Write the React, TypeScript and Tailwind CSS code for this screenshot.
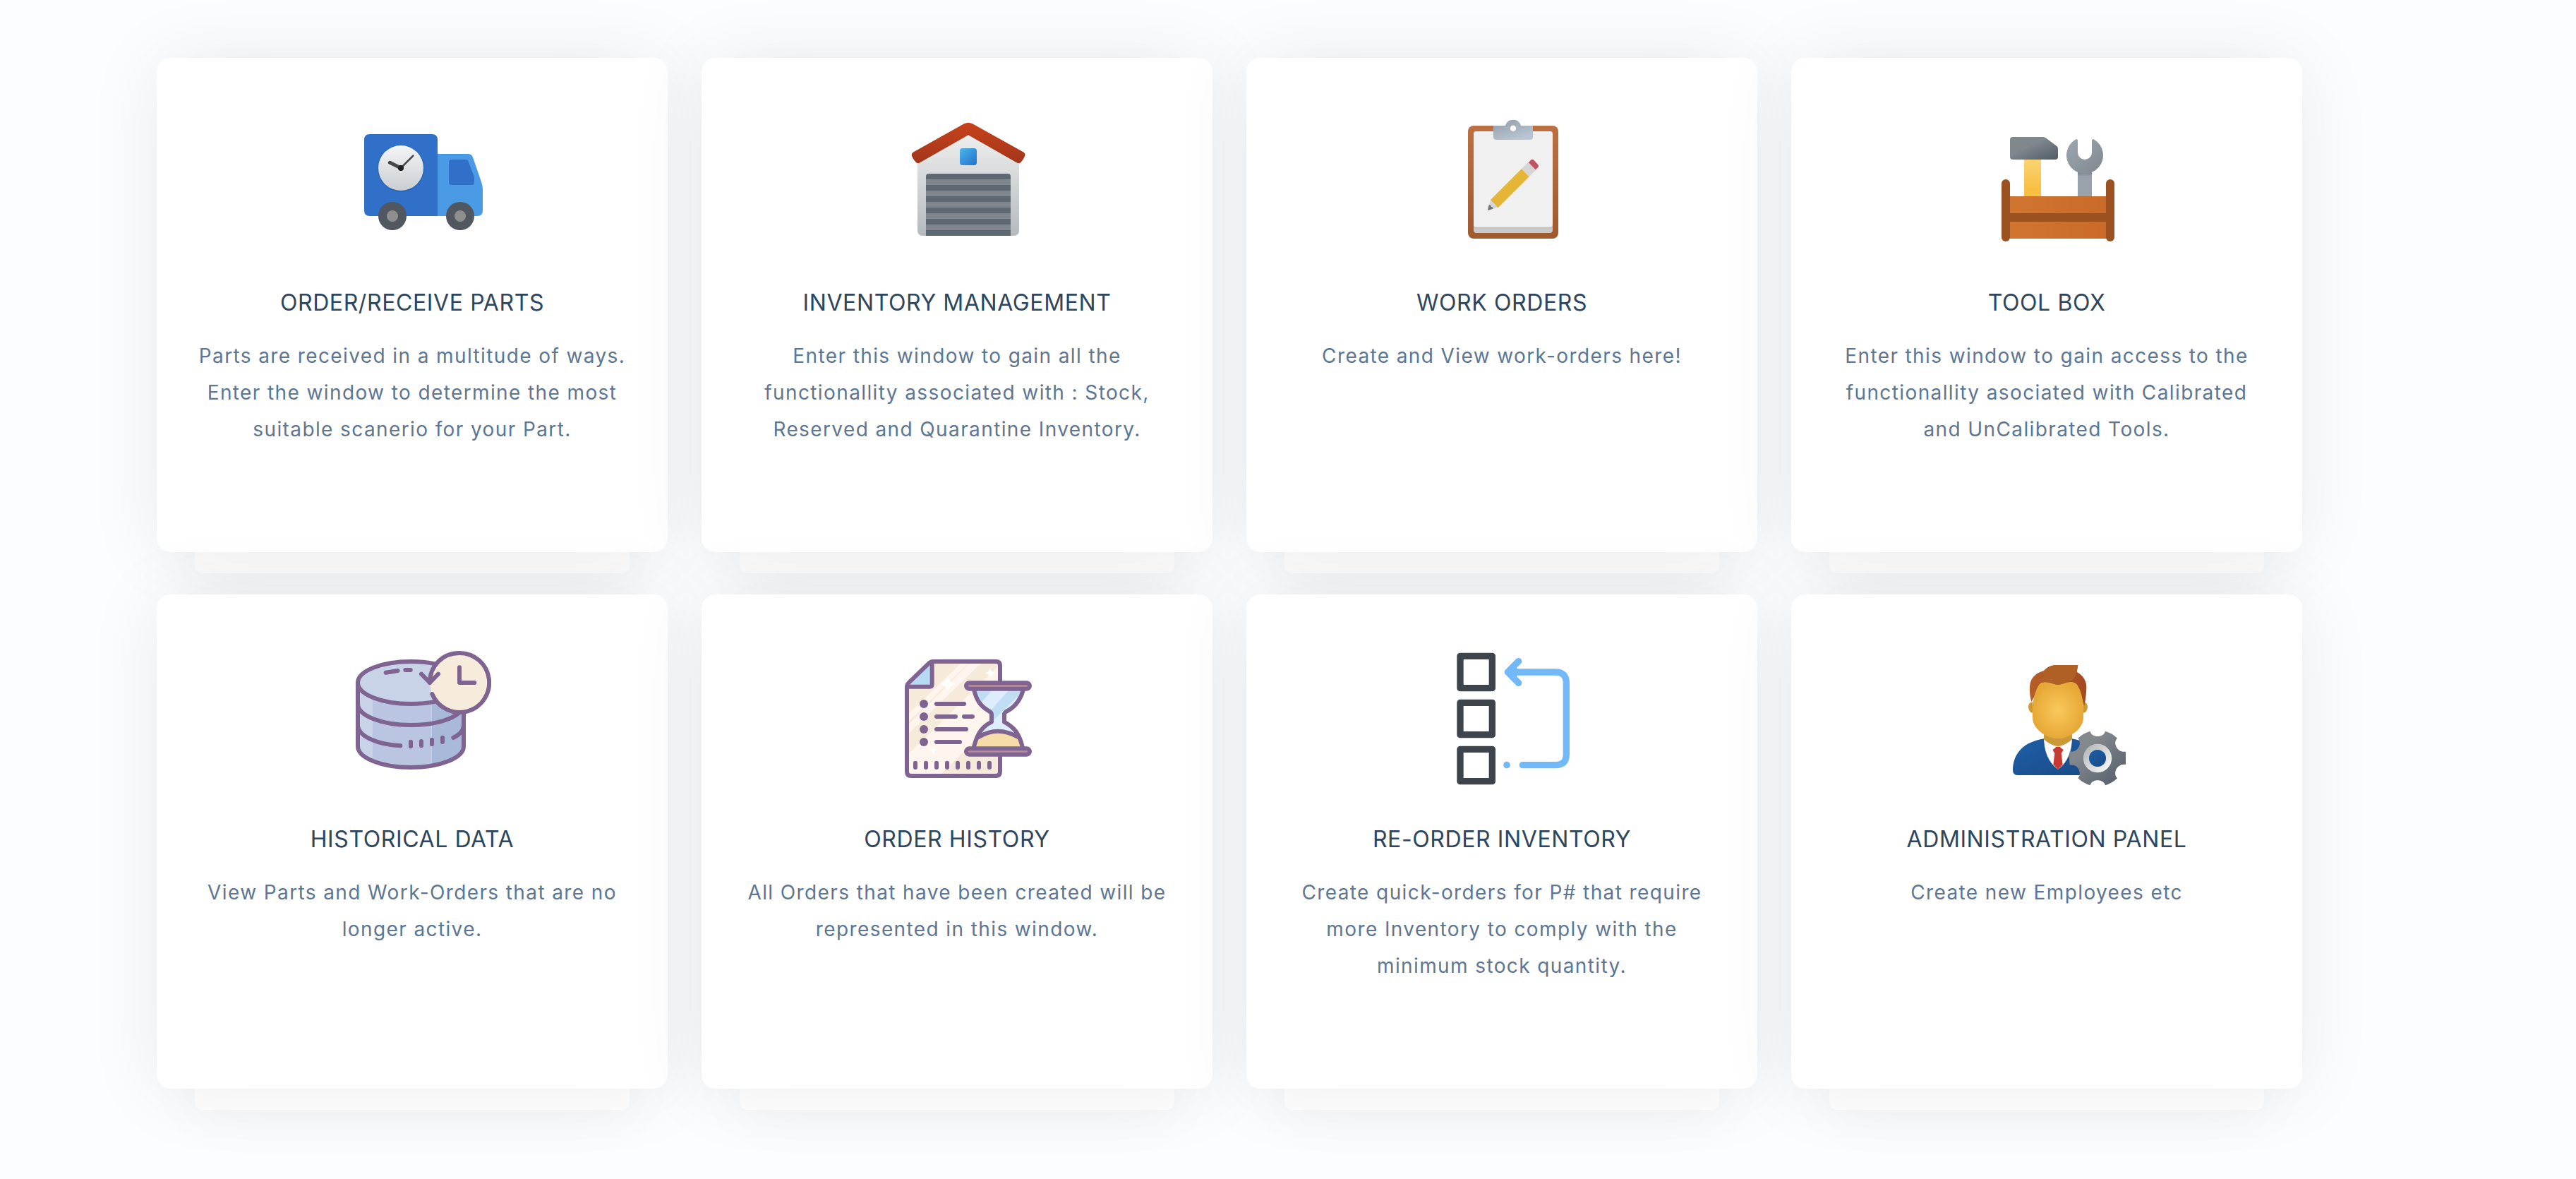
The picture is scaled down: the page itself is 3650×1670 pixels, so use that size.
import type { ReactNode } from "react";

const P = "#7f6491";

function TruckIcon() {
  return (
    <svg viewBox="42 6 576 576" className="size-48">
      <defs>
        <linearGradient id="truckClock" x1="0" y1="0" x2="0" y2="1">
          <stop offset="0" stopColor="#f4f5f7" />
          <stop offset="1" stopColor="#caced1" />
        </linearGradient>
        <radialGradient id="truckShade">
          <stop offset="0.85" stopColor="#123a70" stopOpacity="0.45" />
          <stop offset="1" stopColor="#123a70" stopOpacity="0" />
        </radialGradient>
      </defs>
      <path d="M390 174H520Q534 174 540 188L577 296Q582 310 582 324V414Q582 438 558 438H390Z" fill="#4a9ae6" />
      <path d="M102 90H366Q390 90 390 114V438H102Q78 438 78 414V114Q78 90 102 90Z" fill="#3070c8" />
      <path d="M450 198H510Q518 198 521 206L542 262Q546 272 546 282V294Q546 306 534 306H450Q438 306 438 294V210Q438 198 450 198Z" fill="#3070c8" />
      <circle cx="234" cy="236" r="103" fill="url(#truckShade)" />
      <circle cx="234" cy="234" r="96" fill="url(#truckClock)" />
      <path d="M234 234L187 211" stroke="#45484c" strokeWidth="15" strokeLinecap="round" />
      <path d="M234 234L286 182" stroke="#45484c" strokeWidth="8" strokeLinecap="round" />
      <circle cx="234" cy="234" r="12" fill="#1d1f21" />
      <circle cx="198" cy="438" r="60" fill="#50575f" />
      <circle cx="198" cy="438" r="24" fill="#8f8f8f" />
      <circle cx="486" cy="438" r="60" fill="#50575f" />
      <circle cx="486" cy="438" r="24" fill="#8f8f8f" />
    </svg>
  );
}

function GarageIcon() {
  return (
    <svg viewBox="18 6 576 576" className="size-48">
      <defs>
        <linearGradient id="garageWall" x1="0" y1="0" x2="0" y2="1">
          <stop offset="0" stopColor="#f0f0ef" />
          <stop offset="1" stopColor="#b4babe" />
        </linearGradient>
        <linearGradient id="garageRoof" x1="0" y1="0" x2="0" y2="1">
          <stop offset="0" stopColor="#c8421c" />
          <stop offset="1" stopColor="#a2361a" />
        </linearGradient>
        <linearGradient id="garageWindow" x1="0" y1="0" x2="1" y2="1">
          <stop offset="0" stopColor="#4ab4e9" />
          <stop offset="1" stopColor="#2372cc" />
        </linearGradient>
      </defs>
      <path d="M306 80L522 200V498Q522 522 498 522H114Q90 522 90 498V200Z" fill="url(#garageWall)" />
      <path d="M98 212Q90 216 83 209Q70 196 65 180Q64 172 71 167L288 46Q306 36 324 46L542 167Q549 172 547 181Q542 197 530 209Q523 216 514 212L306 94Z" fill="url(#garageRoof)" />
      <rect x="270" y="150" width="72" height="72" rx="11" fill="url(#garageWindow)" />
      <path d="M138 258H474Q486 258 486 270V522H126V270Q126 258 138 258Z" fill="#5d6872" />
      <path d="M126 282H486V306H126ZM126 330H486V354H126ZM126 378H486V402H126ZM126 426H486V450H126ZM126 474H486V498H126Z" fill="#80868e" />
    </svg>
  );
}

function ClipboardIcon() {
  return (
    <svg viewBox="-6 21 576 576" className="size-48">
      <defs>
        <linearGradient id="clipBoard" x1="0" y1="0" x2="0" y2="1">
          <stop offset="0" stopColor="#bd7042" />
          <stop offset="1" stopColor="#9f5a2e" />
        </linearGradient>
        <linearGradient id="clipMetal" x1="0" y1="0" x2="0.6" y2="1">
          <stop offset="0" stopColor="#939da7" />
          <stop offset="1" stopColor="#b9c5d3" />
        </linearGradient>
      </defs>
      <rect x="90" y="69" width="384" height="480" rx="24" fill="url(#clipBoard)" />
      <rect x="114" y="93" width="336" height="432" rx="12" fill="#c9c9c9" />
      <rect x="114" y="93" width="336" height="412" rx="12" fill="#bfbfbf" />
      <rect x="114" y="93" width="336" height="407" rx="12" fill="#f0f0f0" />
      <path d="M198 69H248Q257 44 282 44Q307 44 316 69H366V117Q366 129 354 129H210Q198 129 198 117Z" fill="url(#clipMetal)" />
      <circle cx="282" cy="80" r="12" fill="#fff" />
      <path d="M174 429L186 384L218 416Z" fill="#d6d6d6" />
      <path d="M174 429L179 406Q188 406 188 413Q196 414 196 422Z" fill="#707070" />
      <path d="M186 384L318 252L350 286L218 418Z" fill="#e5b636" />
      <path d="M318 252L348 222L382 254L350 286Z" fill="#d5d5d5" />
      <path d="M348 226L357 215Q363 209 370 215L387 234Q393 240 388 246L377 256Z" fill="#c05360" />
    </svg>
  );
}

function ToolBoxIcon() {
  return (
    <svg viewBox="30 -24 576 576" className="size-48">
      <defs>
        <linearGradient id="toolHead" x1="0" y1="0" x2="1" y2="1">
          <stop offset="0.4" stopColor="#80878d" />
          <stop offset="1" stopColor="#4f5b66" />
        </linearGradient>
        <linearGradient id="toolHandle" x1="0" y1="0" x2="0" y2="1">
          <stop offset="0" stopColor="#fad577" />
          <stop offset="0.8" stopColor="#f9bf43" />
        </linearGradient>
        <linearGradient id="toolWrench" x1="0" y1="0" x2="1" y2="1">
          <stop offset="0" stopColor="#9ea7b0" />
          <stop offset="1" stopColor="#80878e" />
        </linearGradient>
        <linearGradient id="toolShaft" x1="0" y1="0" x2="0" y2="1">
          <stop offset="0" stopColor="#6d737a" />
          <stop offset="0.22" stopColor="#99a1ab" />
        </linearGradient>
        <linearGradient id="toolWood" x1="0" y1="0" x2="1" y2="0">
          <stop offset="0" stopColor="#d07631" />
          <stop offset="1" stopColor="#ca6a28" />
        </linearGradient>
      </defs>
      <rect x="174" y="160" width="72" height="164" fill="url(#toolHandle)" />
      <path d="M126 72H254Q262 72 268 77L312 110Q318 115 318 122V156Q318 168 306 168H126Q114 168 114 156V84Q114 72 126 72Z" fill="url(#toolHead)" />
      <rect x="402" y="215" width="60" height="109" fill="url(#toolShaft)" />
      <path d="M402 86Q400 78 392 83A78 78 0 1 0 472 83Q464 78 462 86V138A30 30 0 0 1 402 138Z" fill="url(#toolWrench)" />
      <rect x="105" y="324" width="426" height="180" fill="url(#toolWood)" />
      <rect x="105" y="396" width="426" height="36" fill="#9c5120" />
      <rect x="78" y="252" width="36" height="264" rx="18" fill="#9c5120" />
      <rect x="522" y="252" width="36" height="264" rx="18" fill="#9c5120" />
    </svg>
  );
}

function DatabaseIcon() {
  return (
    <svg viewBox="72 66 576 576" className="size-48" fill="none" stroke={P} strokeWidth="18" strokeLinecap="round" strokeLinejoin="round">
      <path d="M81 201H144V530Q81 505 81 471Z" fill="#c8d3e8" stroke="none" />
      <path d="M144 250H395V552Q260 575 144 530Z" fill="#bac5e1" stroke="none" />
      <path d="M395 250H531V471Q531 525 395 552Z" fill="#a9b9d9" stroke="none" />
      <ellipse cx="306" cy="201" rx="225" ry="90" fill="#c8d3e8" stroke="none" />
      <path d="M410 121Q362 111 306 111C182 111 81 151 81 201S182 291 306 291Q362 291 412 281" />
      <path d="M81 201V471C81 521 182 561 306 561S531 521 531 471V320" />
      <path d="M81 291C81 341 182 381 306 381C395 381 470 362 508 332" />
      <path d="M81 384C85 430 165 464 262 469" />
      <path d="M487 435Q529 414 531 384" />
      <path d="M306 452V472M351 450V469M396 443V463M441 434V453M200 158L251 150M283 147H305" />
      <circle cx="513" cy="201" r="126" fill="#f7ecdc" stroke="none" />
      <path d="M387 201C387 130 441 75 513 75A126 126 0 1 1 397 249" />
      <path d="M351 164L387 201L423 164M513 136V201H577" />
    </svg>
  );
}

function HourglassIcon() {
  return (
    <svg viewBox="48 36 576 576" className="size-48" fill="none" stroke={P} strokeWidth="18" strokeLinecap="round" strokeLinejoin="round">
      <defs>
        <clipPath id="pageClip">
          <path d="M180 81H454Q471 81 471 98V549Q471 567 453 567H93Q75 567 75 549V186Z" />
        </clipPath>
        <clipPath id="glassClip">
          <path d="M360 203H570Q555 262 525 285Q489 302 489 322Q489 340 530 365Q545 385 565 443H360Q378 385 395 365Q435 340 435 322Q435 302 400 280Q370 262 360 203Z" />
        </clipPath>
      </defs>
      <g clipPath="url(#pageClip)" stroke="none">
        <path d="M60 70H480V580H60Z" fill="#f6ebdb" />
        <path d="M60 370L360 70H408L60 408Z" fill="#fef5ef" />
        <path d="M60 495L480 85V300L190 590H60Z" fill="#fef5ef" />
        <path d="M60 325L325 70H355L60 358Z" fill="#fef5ef" />
      </g>
      <path d="M180 84V187H80Z" fill="#b6d9f4" stroke="none" />
      <path d="M471 170V98Q471 81 454 81H186Q176 81 168 89L84 170Q75 179 75 190V549Q75 567 93 567H453Q471 567 471 549V480" />
      <path d="M182 86V178Q182 188 172 188H80" />
      <g fill="#fff" stroke="none">
        <path d="M249 144Q255 170 281 176Q255 182 249 207Q243 182 217 176Q243 170 249 144Z" />
        <path d="M429 107Q433 126 451 130Q433 134 429 151Q425 134 408 130Q425 126 429 107Z" />
        <path d="M189 440Q192 454 204 457Q192 460 189 472Q186 460 174 457Q186 454 189 440Z" />
      </g>
      <g fill={P} stroke="none">
        <circle cx="147" cy="261" r="18" />
        <circle cx="147" cy="315" r="18" />
        <circle cx="147" cy="369" r="18" />
        <circle cx="147" cy="423" r="18" />
      </g>
      <path d="M201 261H318M201 315H282M318 315H354M201 369H327M201 423H300" />
      <path d="M111 512V531M156 512V531M201 512V531M246 512V531M291 512V531M336 512V531M381 512V531M426 512V531" />
      <g clipPath="url(#glassClip)" stroke="none">
        <path d="M340 190H590V450H340Z" fill="#deedfd" />
        <path d="M340 200H440L375 275H340ZM515 195H580L430 345V290Z" fill="#c0ddf4" />
        <path d="M350 450V402Q462 352 575 402V450Z" fill="#f6dca9" />
      </g>
      <path d="M360 200C370 245 388 270 420 289Q435 297 435 306V338C400 355 376 380 360 443M570 200C558 245 538 270 506 289Q489 297 489 306V338C530 360 552 385 566 443" />
      <path d="M380 402Q460 352 548 402" />
      <rect x="327" y="172" width="270" height="25" rx="12.500" fill="#b88f96" />
      <rect x="327" y="451" width="270" height="25" rx="12.500" fill="#b88f96" />
    </svg>
  );
}

function ReorderIcon() {
  return (
    <svg viewBox="24 36 576 576" className="size-48" fill="none" strokeLinecap="round" strokeLinejoin="round">
      <g stroke="#3d444b" strokeWidth="28">
        <rect x="87" y="58" width="136" height="136" />
        <rect x="87" y="256" width="136" height="136" />
        <rect x="87" y="454" width="136" height="136" />
      </g>
      <g stroke="#72b9fa" strokeWidth="28">
        <path d="M300 126H492Q538 126 538 172V476Q538 521 492 521H352" />
        <path d="M335 80L289 126L335 172" />
        <path d="M289 126L325 110V142Z" fill="#72b9fa" strokeWidth="8" />
      </g>
      <circle cx="285" cy="521" r="14.500" fill="#72b9fa" />
    </svg>
  );
}

function AdminIcon() {
  return (
    <svg viewBox="-30 6 576 576" className="size-48">
      <defs>
        <radialGradient id="adminFace">
          <stop offset="0" stopColor="#fbc85c" />
          <stop offset="1" stopColor="#e6a937" />
        </radialGradient>
        <linearGradient id="adminSuit" x1="0" y1="0" x2="1" y2="1">
          <stop offset="0" stopColor="#1e5fa8" />
          <stop offset="1" stopColor="#194a85" />
        </linearGradient>
        <linearGradient id="adminGear" x1="0" y1="0" x2="1" y2="1">
          <stop offset="0.3" stopColor="#83888d" />
          <stop offset="1" stopColor="#515c67" />
        </linearGradient>
        <linearGradient id="adminRing" x1="0" y1="0" x2="1" y2="1">
          <stop offset="0" stopColor="#b5b7ba" />
          <stop offset="1" stopColor="#f7f7f7" />
        </linearGradient>
        <linearGradient id="adminHair" x1="0" y1="0" x2="1" y2="0">
          <stop offset="0" stopColor="#b65f27" />
          <stop offset="1" stopColor="#a34a20" />
        </linearGradient>
      </defs>
      <path d="M66 512C66 440 115 392 198 379H318Q380 388 420 430V534H88Q66 534 66 512Z" fill="url(#adminSuit)" />
      <path d="M198 372H318C318 430 300 480 258 509C216 480 198 430 198 372Z" fill="#fff" />
      <path d="M236 425Q246 419 250 413H266Q270 419 281 425Q278 434 272 440L278 489L258 509L238 489L244 440Q238 434 236 425Z" fill="#c63a32" />
      <path d="M198 345H318V382Q290 408 258 412Q226 408 198 382Z" fill="#c99a35" />
      <path d="M150 222Q132 225 132 245Q134 268 152 270ZM366 222Q384 225 384 245Q382 268 364 270Z" fill="#cf9a35" />
      <path d="M145 222Q136 190 138 155C142 118 165 100 198 90C215 70 236 66 260 66H343L338 95C364 110 377 130 379 155Q379 195 370 240L340 160H180Z" fill="url(#adminHair)" />
      <path d="M150 240Q155 185 177 150Q187 138 205 138Q225 138 240 146Q258 152 276 146Q295 138 312 138Q330 138 340 150Q362 185 366 240V290C366 335 310 378 258 378S150 335 150 290Z" fill="url(#adminFace)" />
      <path d="M196 94C215 70 236 66 260 66H343L338 95Q333 118 314 136Q295 136 276 146Q258 152 240 146Q215 136 190 140Z" fill="#b05f25" />
      <path
        d="M395 347C401 376 452 376 459 347Q488 355 510 377C489 396 510 440 546 434V489C510 482 489 526 510 547Q488 569 459 577C452 549 401 549 395 577Q366 569 343 547C362 526 344 484 308 491Q304 461 308 433C344 440 362 396 343 377Q366 355 395 347Z"
        fill="url(#adminGear)"
      />
      <circle cx="426" cy="462" r="48" fill="none" stroke="url(#adminRing)" strokeWidth="25" />
      <circle cx="426" cy="462" r="36" fill="url(#adminSuit)" />
    </svg>
  );
}

type Item = { title: string; lines: string[]; icon: ReactNode };

const items: Item[] = [
  {
    title: "ORDER/RECEIVE PARTS",
    lines: ["Parts are received in a multitude of ways.", "Enter the window to determine the most", "suitable scanerio for your Part."],
    icon: <TruckIcon />,
  },
  {
    title: "INVENTORY MANAGEMENT",
    lines: ["Enter this window to gain all the", "functionallity associated with : Stock,", "Reserved and Quarantine Inventory."],
    icon: <GarageIcon />,
  },
  { title: "WORK ORDERS", lines: ["Create and View work-orders here!"], icon: <ClipboardIcon /> },
  {
    title: "TOOL BOX",
    lines: ["Enter this window to gain access to the", "functionallity asociated with Calibrated", "and UnCalibrated Tools."],
    icon: <ToolBoxIcon />,
  },
  { title: "HISTORICAL DATA", lines: ["View Parts and Work-Orders that are no", "longer active."], icon: <DatabaseIcon /> },
  { title: "ORDER HISTORY", lines: ["All Orders that have been created will be", "represented in this window."], icon: <HourglassIcon /> },
  {
    title: "RE-ORDER INVENTORY",
    lines: ["Create quick-orders for P# that require", "more Inventory to comply with the", "minimum stock quantity."],
    icon: <ReorderIcon />,
  },
  { title: "ADMINISTRATION PANEL", lines: ["Create new Employees etc"], icon: <AdminIcon /> },
];

function Card({ title, lines, icon }: Item) {
  return (
    <div className="relative h-[700px]">
      {/* Narrower sheet peeking out from under the card */}
      <div className="absolute inset-x-[54px] top-[30px] h-[700px] rounded-[10px] bg-white shadow-[0_4px_90px_rgba(0,0,0,0.045)]" />
      <div className="relative flex h-full flex-col items-center rounded-[20px] bg-white pt-20 text-center shadow-[0_4px_108px_rgba(0,0,0,0.075)]">
        <div className="pl-8">{icon}</div>
        <h3 className="mt-[51px] text-[32px] leading-[48px] tracking-[0.6px] whitespace-nowrap text-[#2e465d]">{title}</h3>
        <p className="mt-[25px] text-[28px] leading-[52px] tracking-[1.39px] whitespace-nowrap text-[#5c7693]">
          {lines.map((line) => (
            <span key={line} className="block">
              {line}
            </span>
          ))}
        </p>
      </div>
    </div>
  );
}

export default function App() {
  return (
    <main className="h-[1670px] w-[3650px] overflow-hidden bg-[#fcfdff] pt-[82px] pl-[222px] font-['Inter',sans-serif]">
      <div className="grid w-[3040px] grid-cols-4 gap-x-12 gap-y-[60px]">
        {items.map((item) => (
          <Card key={item.title} {...item} />
        ))}
      </div>
    </main>
  );
}
